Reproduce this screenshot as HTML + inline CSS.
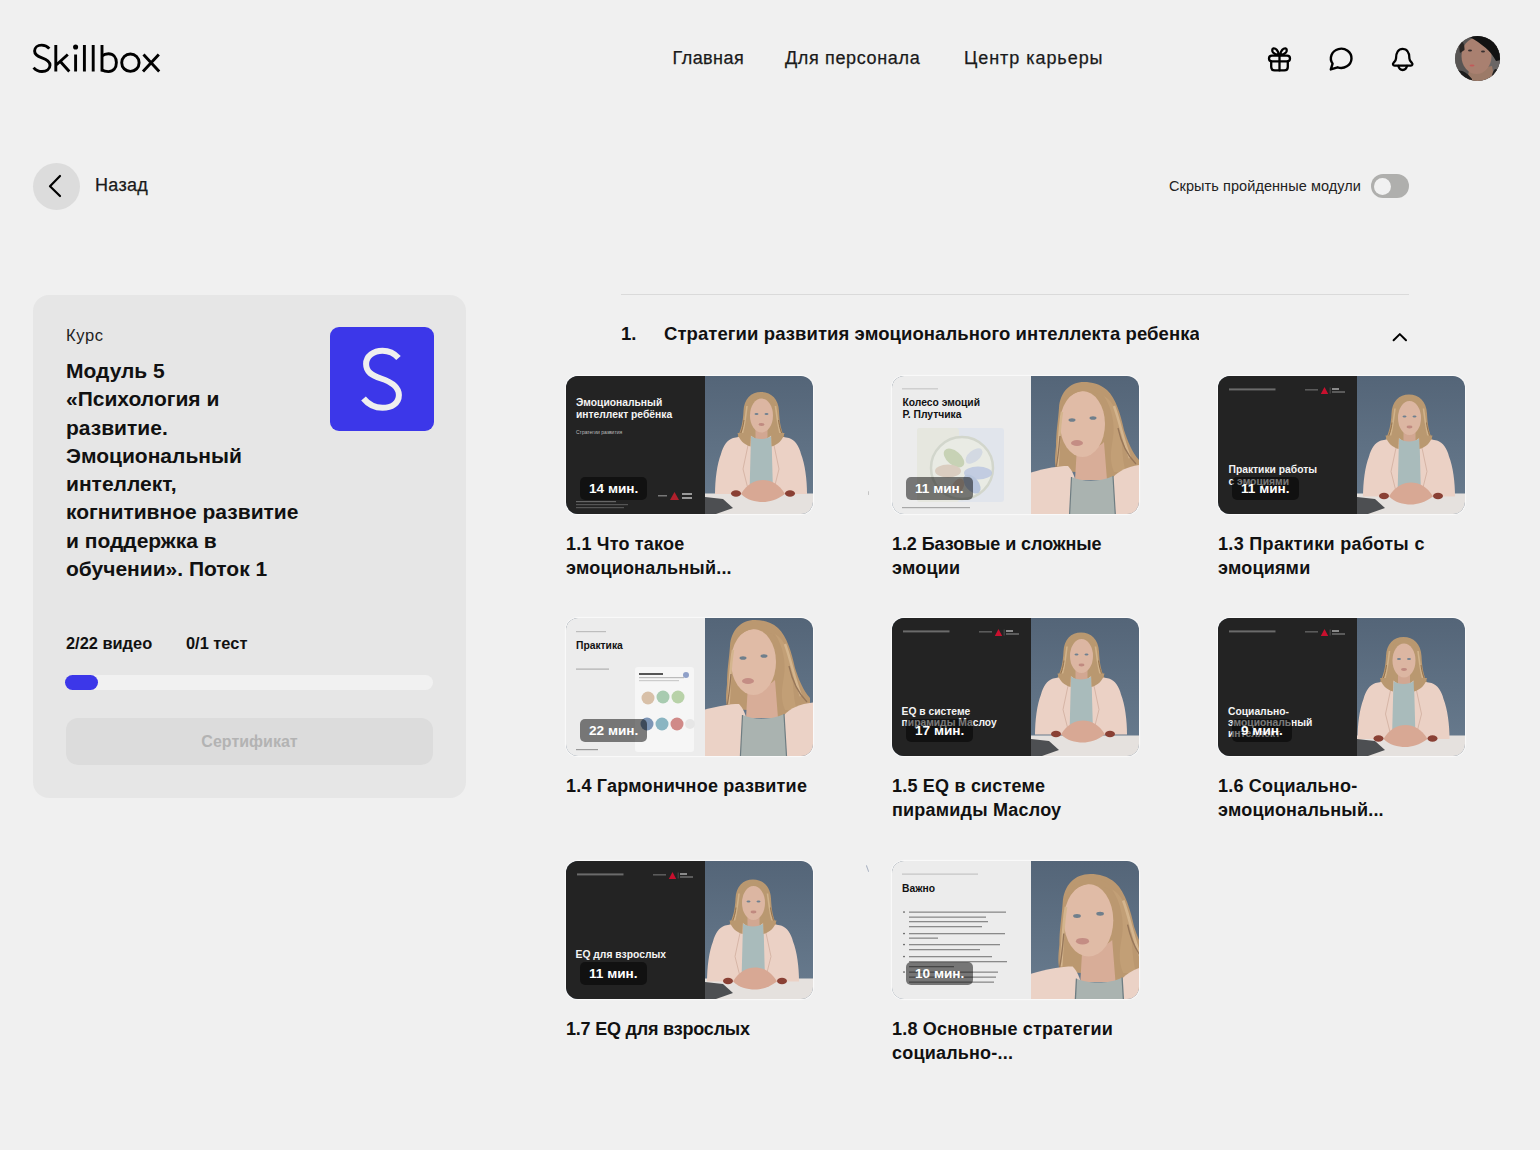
<!DOCTYPE html>
<html lang="ru">
<head>
<meta charset="utf-8">
<title>Skillbox</title>
<style>
*{box-sizing:border-box;margin:0;padding:0}
html,body{width:1540px;height:1150px;overflow:hidden;background:#f0f0f0;font-family:"Liberation Sans",sans-serif;color:#111}
.abs{position:absolute}
.nav{position:absolute;top:47px;font-size:18px;line-height:22px;color:#1a1a1a;white-space:nowrap;-webkit-text-stroke:0.25px #1a1a1a}
.card{position:absolute;left:33px;top:295px;width:433px;height:503px;background:#e6e6e6;border-radius:16px}
.thumb{position:absolute;width:247px;height:138px;border-radius:12px;overflow:hidden;box-shadow:0 0 1px 1px rgba(255,255,255,.65)}
.thumb svg{display:block}
.ttl{position:absolute;width:240px;font-size:18px;line-height:24px;font-weight:700;color:#111;white-space:nowrap;letter-spacing:0.2px}
.badge{position:absolute;left:14px;top:101px;height:23px;border-radius:5px;background:rgba(0,0,0,.5);color:#fff;font-size:13.6px;font-weight:700;line-height:23px;padding:0 9px;white-space:nowrap}
</style>
</head>
<body>
<!-- logo -->
<svg class="abs" style="left:0;top:0" width="180" height="90" viewBox="0 0 180 90" fill="none" stroke="#000" stroke-width="2.9" stroke-linecap="butt" stroke-linejoin="round">
  <path d="M49.3 48.6C47.3 46.3 44.6 45.1 41.6 45.1C37.6 45.1 34.6 47.6 34.6 51C34.6 54.6 37.6 56.4 42 57.9C47 59.6 50 61.6 50 65.3C50 69.1 46.4 71.5 42 71.5C38.6 71.5 35.6 70 33.6 67.6"/>
  <path d="M55.8 45V71.5M67.8 54.5L56.2 65M60.3 61.5L69.3 71.5"/>
  <path d="M75.6 54.5V71.5"/>
  <circle cx="75.6" cy="47" r="1.1" fill="#000"/>
  <path d="M84.4 45V71.5M93.2 45V71.5M102 45V71.5"/>
  <path d="M102 56C103.6 54.6 105.8 53.8 108.4 53.8C113.6 53.8 116.4 57.6 116.4 62.6C116.4 67.8 113.4 71.6 108.4 71.6C105.6 71.6 103.6 71 102 70"/>
  <circle cx="130.4" cy="62.7" r="8.7"/>
  <path d="M143.5 54.5L159.2 71.5M158.8 54.5L143 71.5"/>
</svg>

<!-- nav -->
<div class="nav" style="left:672.5px;letter-spacing:0.45px">Главная</div>
<div class="nav" style="left:785px;letter-spacing:0.65px">Для персонала</div>
<div class="nav" style="left:964px;letter-spacing:0.95px">Центр карьеры</div>

<!-- icons -->
<svg class="abs" style="left:1262px;top:42px" width="34" height="34" viewBox="0 0 34 34" fill="none" stroke="#000" stroke-width="2.3" stroke-linecap="round" stroke-linejoin="round">
  <rect x="7" y="13.6" width="21" height="5.8" rx="2.9"/>
  <path d="M9.2 19.4V25C9.2 27 10.7 28.4 12.7 28.4H22.3C24.3 28.4 25.8 27 25.8 25V19.4"/>
  <path d="M17.5 13.6V28.4"/>
  <path d="M17.3 13C16 9 13.5 6.2 11.5 6.4C10 6.6 9.9 8.8 11 10.4C12.3 12.2 15 13 17.3 13Z"/>
  <path d="M17.7 13C19 9 21.5 6.2 23.5 6.4C25 6.6 25.1 8.8 24 10.4C22.7 12.2 20 13 17.7 13Z"/>
</svg>
<svg class="abs" style="left:1323px;top:41.5px" width="34" height="34" viewBox="0 0 34 34" fill="none" stroke="#000" stroke-width="2.4" stroke-linecap="round" stroke-linejoin="round">
  <path d="M9.6 21.6A10.3 9.6 0 1 1 14.6 25.3L7.8 27.4Z"/>
</svg>
<svg class="abs" style="left:1386px;top:41.5px" width="34" height="34" viewBox="0 0 34 34" fill="none" stroke="#000" stroke-width="2.3" stroke-linecap="round" stroke-linejoin="round">
  <path d="M10 16.5C10 10.5 12.5 6.8 16.7 6.8C20.9 6.8 23.4 10.5 23.4 16.5C23.4 18.5 24.8 19.8 25.8 20.8C27 22 26.4 23.6 24.8 23.6H8.6C7 23.6 6.4 22 7.6 20.8C8.6 19.8 10 18.5 10 16.5Z"/>
  <path d="M12.4 23.8C12.9 26.5 14.6 28 16.7 28C18.8 28 20.5 26.5 21 23.8"/>
</svg>
<!-- avatar -->
<div class="abs" style="left:1454.5px;top:35.8px;width:45.5px;height:45.5px;border-radius:50%;overflow:hidden;background:#5a5756">
  <svg width="46" height="46" viewBox="0 0 46 46">
    <rect width="46" height="46" fill="#585554"/>
    <rect x="34" y="0" width="12" height="46" fill="#6a6665"/>
    <path d="M14 34L37 30L40 46L12 46Z" fill="#9c7a68"/>
    <ellipse cx="21.5" cy="20" rx="15" ry="18" fill="#a98070"/>
    <path d="M0 35C6 33 12 36 17 43L17 46L0 46Z" fill="#1c1c1c"/>
    <path d="M40 33C44 33 46 38 46 46L35 46C37 41 37 36 40 33Z" fill="#222"/>
    <path d="M14 0.5C26 -2 41 2 46 14L46 24L41 25C36 15 27 8 14 0.5Z" fill="#121212"/>
    <path d="M5.5 6C8 5 9.5 8 9.5 14L5 17C4 12 4 8 5.5 6Z" fill="#2a2624"/>
    <ellipse cx="15" cy="14.5" rx="2" ry="1" fill="#3a3030"/>
    <ellipse cx="28" cy="15.5" rx="2" ry="1" fill="#3a3030"/>
    <ellipse cx="17" cy="29.5" rx="2.5" ry="0.9" fill="#c25a5a"/>
  </svg>
</div>
<!-- back -->
<div class="abs" style="left:33px;top:163px;width:47px;height:47px;border-radius:50%;background:#dcdcdc"></div>
<svg class="abs" style="left:33px;top:163px" width="47" height="47" viewBox="0 0 47 47" fill="none" stroke="#000" stroke-width="2.2" stroke-linecap="round" stroke-linejoin="round">
  <path d="M27 13L17 23.3L27 33"/>
</svg>
<div class="abs" style="left:95px;top:174px;font-size:18px;line-height:22px;color:#1a1a1a;-webkit-text-stroke:0.25px #1a1a1a;letter-spacing:0.3px">Назад</div>

<!-- toggle -->
<div class="abs" style="left:1169px;top:177px;font-size:14.5px;line-height:18px;color:#222;white-space:nowrap;letter-spacing:0.07px">Скрыть пройденные модули</div>
<div class="abs" style="left:1371px;top:174px;width:37.5px;height:23.6px;border-radius:12px;background:#afafad"></div>
<div class="abs" style="left:1374.2px;top:177.6px;width:17px;height:17px;border-radius:50%;background:#f1f1f1"></div>

<!-- course card -->
<div class="card"></div>
<div class="abs" style="left:66px;top:325px;font-size:16.5px;line-height:20px;color:#222;letter-spacing:0.6px">Курс</div>
<div class="abs" style="left:66px;top:357px;width:260px;font-size:21px;line-height:28.3px;font-weight:700;color:#111">Модуль 5<br>«Психология и<br>развитие.<br>Эмоциональный<br>интеллект,<br>когнитивное развитие<br>и поддержка в<br>обучении». Поток 1</div>
<div class="abs" style="left:330px;top:327px;width:104px;height:104px;border-radius:9px;background:#3c37e9"></div>
<svg class="abs" style="left:330px;top:327px" width="104" height="104" viewBox="0 0 104 104" fill="none" stroke="#efefef" stroke-width="6" stroke-linecap="butt">
  <path d="M68.5 31C64.5 26.5 58.5 23.7 52.5 23.7C43.5 23.7 36.1 29 36.1 37C36.1 45 42 48.5 51 51.5C61.5 55 68.9 59.5 68.9 68C68.9 76.5 61.5 80.8 52.5 80.8C44.5 80.8 38 77 33.5 71.5"/>
</svg>
<div class="abs" style="left:66px;top:633px;font-size:16.4px;line-height:20px;font-weight:700;color:#111;white-space:nowrap">2/22 видео</div>
<div class="abs" style="left:186px;top:633px;font-size:16.4px;line-height:20px;font-weight:700;color:#111;white-space:nowrap">0/1 тест</div>
<div class="abs" style="left:66px;top:675px;width:367px;height:15px;border-radius:8px;background:#f1f1f1"></div>
<div class="abs" style="left:65px;top:675px;width:33px;height:15px;border-radius:8px;background:#3c37e9"></div>
<div class="abs" style="left:66px;top:718px;width:367px;height:47px;border-radius:12px;background:#dcdcdc;color:#b3b3b3;font-size:16px;font-weight:700;line-height:47px;text-align:center">Сертификат</div>

<!-- section -->
<div class="abs" style="left:621px;top:294px;width:788px;height:1px;background:#dadada"></div>
<div class="abs" style="left:621px;top:323px;font-size:18.5px;line-height:22px;font-weight:700;color:#111">1.</div>
<div class="abs" style="left:664px;top:323px;width:535px;overflow:hidden;font-size:18.5px;line-height:22px;font-weight:700;color:#111;white-space:nowrap;letter-spacing:0.08px">Стратегии развития эмоционального интеллекта ребенка</div>
<svg class="abs" style="left:1388px;top:326px" width="24" height="20" viewBox="0 0 24 20" fill="none" stroke="#000" stroke-width="2" stroke-linecap="round" stroke-linejoin="round">
  <path d="M5.6 14.3L11.8 8.1L18 14.3"/>
</svg>

<!-- THUMBS -->
<svg width="0" height="0" style="position:absolute">
  <defs>
    <linearGradient id="bg" x1="0" y1="0" x2="0" y2="1">
      <stop offset="0" stop-color="#546578"/>
      <stop offset="1" stop-color="#697c8f"/>
    </linearGradient>
    <symbol id="seat" viewBox="0 0 247 138" width="247" height="138" overflow="visible">
      <path d="M195 16C185 16 178 23 177.5 35C177 46 175 54 172 60C170 65 173 70 178 70L212 70C217 70 220 65 218 60C215 54 213.5 46 213 35C212.5 23 205 16 195 16Z" fill="#b99870"/>
      <rect x="189.5" y="50" width="12" height="16" fill="#d2a792"/>
      <ellipse cx="195.5" cy="39.5" rx="11.5" ry="17" fill="#dcb6a2"/>
      <path d="M183.5 29C185 21 190 18.5 195 18.5C201 18.5 206 22 207.5 29C203 23.5 199 22 195 22C190 22 186 24 183.5 29Z" fill="#b99870"/>
      <path d="M181 30C179.5 42 178.5 52 175 62M209.5 30C211 42 212 52 215.5 62" fill="none" stroke="#d0b28a" stroke-width="1.6"/>
      <path d="M178 44C177 52 175 57 173 61M212.5 44C213.5 52 215.5 57 217.5 61" fill="none" stroke="#94734f" stroke-width="1"/>
      <ellipse cx="190.5" cy="38" rx="2" ry="1" fill="#6f8090"/>
      <ellipse cx="200.5" cy="38" rx="2" ry="1" fill="#6f8090"/>
      <ellipse cx="195.5" cy="48.5" rx="3" ry="1.4" fill="#c08a80"/>
      <path d="M149 118C149 104 151 88 155 78C157 70 161 64 167 62L184 59L195 67L206 59L223 62C229 64 233 70 235 78C239 88 241 104 241 118Z" fill="#ebd1c5"/>
      <path d="M185 60C190 64 200 64 205.5 60L207 117L183.5 117Z" fill="#a9bbbb"/>
      <path d="M184 60L177 93L183 117M206 60L213 93L207 117" fill="none" stroke="#d6b5a6" stroke-width="1"/>
      <path d="M171.5 57C173 64 178 68.5 184.5 70.5L185 57Z" fill="#b99870"/>
      <path d="M218.5 57C217 64 212 68.5 205.5 70.5L205 57Z" fill="#b99870"/>
      <path d="M175 118C181 108 189 104 197 104C205 104 213 108 219 118C211 124 203 126 197 126C189 126 181 124 175 118Z" fill="#d8a894"/>
      <ellipse cx="170" cy="117.5" rx="5" ry="3.2" fill="#8a4034"/>
      <ellipse cx="224" cy="117.5" rx="5" ry="3.2" fill="#8a4034"/>
    </symbol>
    <symbol id="close" viewBox="0 0 247 138" width="247" height="138" overflow="visible">
      <path d="M192 6C178 6 168 16 167 32C166 46 164 56 164 70C163 80 162 88 165 95L185 96L222 110L247 112L247 84C240 76 236 66 232 54C229 40 224 22 215 14C208 8 200 6 192 6Z" fill="#bb9870"/>
      <path d="M185 70C192 74 204 74 212 66L215 104L183 104Z" fill="#d8ad98"/>
      <ellipse cx="190.5" cy="48" rx="22.5" ry="33" fill="#e0bba6"/>
      <path d="M168 36C170 19 180 10 193 10C206 10 215 18 219 30C212 20 203 15 193 15C182 15 173 22 168 36Z" fill="#bb9870"/>
      <path d="M212 20C220 32 223 48 221 62C219 74 217 84 222 96L234 96C229 82 231 62 227 44C224 32 219 24 212 20Z" fill="#c29f76"/>
      <path d="M170 36C167 52 167 70 165.5 90M222 30C228 46 231 64 238 82" fill="none" stroke="#d4b58e" stroke-width="2.5"/>
      <path d="M226 52C229 66 234 78 244 88M168 60C167 72 166 82 164 92" fill="none" stroke="#97775a" stroke-width="1.3"/>
      <ellipse cx="180" cy="44" rx="3.5" ry="1.8" fill="#6f7f8c"/>
      <ellipse cx="201" cy="42" rx="3.5" ry="1.8" fill="#6f7f8c"/>
      <ellipse cx="185" cy="67" rx="6" ry="3" fill="#c48d84"/>
      <path d="M130 150L130 99C150 93 164 90 176 90C180 94 183 101 184 107L178 150Z" fill="#ebd2c6"/>
      <path d="M221 101C229 93 239 89 256 88L256 150L223 150Z" fill="#ebd2c6"/>
      <path d="M179.5 101C190 106 210 106 221 100L224 150L177 150Z" fill="#aab3b0"/>
      <path d="M179.5 101L177 150M221 100L224 150" fill="none" stroke="#6e7d82" stroke-width="1.2"/>
    </symbol>
    <clipPath id="ph"><rect x="139" y="0" width="108" height="138"/></clipPath>
  </defs>
</svg>

<div class="thumb" style="left:566px;top:376px">
<svg width="247" height="138" viewBox="0 0 247 138">
<rect width="247" height="138" fill="url(#bg)"/>
<g clip-path="url(#ph)"><rect x="139" y="117.5" width="108" height="21" fill="#e5e1de"/><use href="#seat" transform="translate(0 0) scale(1)"/><path d="M139 121L157 123L167 132L150 138L139 138Z" fill="#4d4f52"/></g>
<rect width="139" height="138" fill="#232323"/><text x="10" y="30" font-family="Liberation Sans" font-weight="700" font-size="10.3" fill="#f4f4f4">Эмоциональный</text><text x="10" y="41.5" font-family="Liberation Sans" font-weight="700" font-size="10.3" fill="#f4f4f4">интеллект ребёнка</text><text x="10" y="58" font-family="Liberation Sans" font-weight="400" font-size="5" fill="#bdbdbd">Стратегии развития</text><path d="M104 124L108.5 116L113 124Z" fill="#b0202c"/><rect x="92" y="119" width="9" height="1.5" fill="#777"/><rect x="116" y="117" width="10" height="2" fill="#999"/><rect x="116" y="121" width="10" height="2" fill="#999"/><rect x="10" y="125" width="40" height="1.2" fill="#666"/><rect x="10" y="128" width="52" height="1.2" fill="#555"/><rect x="10" y="131" width="48" height="1.2" fill="#555"/>
</svg>
<div class="badge">14 мин.</div>
</div>
<div class="thumb" style="left:892px;top:376px">
<svg width="247" height="138" viewBox="0 0 247 138">
<rect width="247" height="138" fill="url(#bg)"/>
<g clip-path="url(#ph)"><use href="#close" transform="translate(0 0) scale(1)"/></g>
<rect width="139" height="138" fill="#ececec"/><rect x="10" y="12.2" width="36" height="1.2" fill="#c8c8c8"/><text x="10.5" y="30" font-family="Liberation Sans" font-weight="700" font-size="10.3" fill="#111">Колесо эмоций</text><text x="10.5" y="41.5" font-family="Liberation Sans" font-weight="700" font-size="10.3" fill="#111">Р. Плутчика</text><rect x="25" y="52" width="87" height="74" rx="3" fill="#e1e5ec"/><rect x="25" y="52" width="42" height="74" rx="3" fill="#e6e7df"/><circle cx="70" cy="92" r="31" fill="#e9ebe4"/><circle cx="70" cy="92" r="31" fill="none" stroke="#d2d6cc" stroke-width="2.5"/><g opacity="0.75"><ellipse cx="62" cy="82" rx="12" ry="7" transform="rotate(40 62 82)" fill="#bccaa6"/><ellipse cx="56" cy="95" rx="13" ry="6.5" fill="#d6c4b4"/><ellipse cx="86" cy="97" rx="14" ry="6.5" fill="#b5c2e0"/><ellipse cx="80" cy="108" rx="11" ry="6.5" transform="rotate(50 80 108)" fill="#a9badb"/><ellipse cx="82" cy="80" rx="10" ry="5.5" transform="rotate(-40 82 80)" fill="#ccd3e2"/><ellipse cx="66" cy="110" rx="8" ry="5.5" transform="rotate(-60 66 110)" fill="#dcc0ae"/></g><rect x="10" y="131" width="68" height="1.2" fill="#a8a8a8"/>
</svg>
<div class="badge">11 мин.</div>
</div>
<div class="thumb" style="left:1218px;top:376px">
<svg width="247" height="138" viewBox="0 0 247 138">
<rect width="247" height="138" fill="url(#bg)"/>
<g clip-path="url(#ph)"><rect x="139" y="117.5" width="108" height="21" fill="#e5e1de"/><use href="#seat" transform="translate(-4 2.5) scale(1)"/><path d="M139 121L157 123L167 132L150 138L139 138Z" fill="#4d4f52"/></g>
<rect width="139" height="138" fill="#232323"/><rect x="11" y="12.4" width="46.5" height="2" fill="#6b6b6b"/><rect x="87" y="13" width="13" height="1.6" fill="#5a5a5a"/><path d="M102.8 18L106.5 11L110.2 18Z" fill="#c8102e"/><rect x="111.8" y="11.5" width="0.6" height="6" fill="#666"/><rect x="114" y="12" width="7" height="2" fill="#8a8a8a"/><rect x="114" y="15.2" width="13" height="1.6" fill="#6a6a6a"/><text x="10.5" y="97" font-family="Liberation Sans" font-weight="700" font-size="10.3" fill="#f4f4f4">Практики работы</text><text x="10.5" y="108.5" font-family="Liberation Sans" font-weight="700" font-size="10.3" fill="#f4f4f4">с эмоциями</text>
</svg>
<div class="badge">11 мин.</div>
</div>
<div class="thumb" style="left:566px;top:618px">
<svg width="247" height="138" viewBox="0 0 247 138">
<rect width="247" height="138" fill="url(#bg)"/>
<g clip-path="url(#ph)"><use href="#close" transform="translate(-3 -4) scale(1)"/></g>
<rect width="139" height="138" fill="#ececec"/><rect x="10" y="13" width="30" height="1.2" fill="#bdbdbd"/><text x="10" y="31" font-family="Liberation Sans" font-weight="700" font-size="10.3" fill="#111">Практика</text><rect x="10" y="50.5" width="33" height="1.2" fill="#b0b0b0"/><rect x="69" y="49" width="59" height="85" rx="3" fill="#f6f6f6"/><rect x="73" y="55" width="24" height="2" fill="#555"/><rect x="73" y="59" width="45" height="1.2" fill="#bbb"/><rect x="73" y="62" width="40" height="1.2" fill="#ccc"/><circle cx="120" cy="57" r="3" fill="#8fa0c8"/><circle cx="82" cy="80" r="6.5" fill="#d8c0a8"/><circle cx="97" cy="79" r="6.5" fill="#a8cbb0"/><circle cx="112" cy="79" r="6.5" fill="#b8d2a8"/><circle cx="81" cy="106" r="6.5" fill="#7d95b5"/><circle cx="96" cy="106" r="6.5" fill="#8ab5c2"/><circle cx="111" cy="106" r="6.5" fill="#d08a88"/><circle cx="124" cy="106" r="5" fill="#e6e6e6"/><rect x="10" y="131" width="22" height="1.2" fill="#999"/>
</svg>
<div class="badge">22 мин.</div>
</div>
<div class="thumb" style="left:892px;top:618px">
<svg width="247" height="138" viewBox="0 0 247 138">
<rect width="247" height="138" fill="url(#bg)"/>
<g clip-path="url(#ph)"><rect x="139" y="117.5" width="108" height="21" fill="#e5e1de"/><use href="#seat" transform="translate(-6 -1.5) scale(1)"/><path d="M139 121L157 123L167 132L150 138L139 138Z" fill="#4d4f52"/></g>
<rect width="139" height="138" fill="#232323"/><rect x="11" y="12.4" width="46.5" height="2" fill="#6b6b6b"/><rect x="87" y="13" width="13" height="1.6" fill="#5a5a5a"/><path d="M102.8 18L106.5 11L110.2 18Z" fill="#c8102e"/><rect x="111.8" y="11.5" width="0.6" height="6" fill="#666"/><rect x="114" y="12" width="7" height="2" fill="#8a8a8a"/><rect x="114" y="15.2" width="13" height="1.6" fill="#6a6a6a"/><text x="9.6" y="97" font-family="Liberation Sans" font-weight="700" font-size="10.3" fill="#f4f4f4">EQ в системе</text><text x="9.6" y="108" font-family="Liberation Sans" font-weight="700" font-size="10.3" fill="#f4f4f4">пирамиды Маслоу</text>
</svg>
<div class="badge">17 мин.</div>
</div>
<div class="thumb" style="left:1218px;top:618px">
<svg width="247" height="138" viewBox="0 0 247 138">
<rect width="247" height="138" fill="url(#bg)"/>
<g clip-path="url(#ph)"><rect x="139" y="117.5" width="108" height="21" fill="#e5e1de"/><use href="#seat" transform="translate(-9.5 3) scale(1)"/><path d="M139 121L157 123L167 132L150 138L139 138Z" fill="#4d4f52"/></g>
<rect width="139" height="138" fill="#232323"/><rect x="11" y="12.4" width="46.5" height="2" fill="#6b6b6b"/><rect x="87" y="13" width="13" height="1.6" fill="#5a5a5a"/><path d="M102.8 18L106.5 11L110.2 18Z" fill="#c8102e"/><rect x="111.8" y="11.5" width="0.6" height="6" fill="#666"/><rect x="114" y="12" width="7" height="2" fill="#8a8a8a"/><rect x="114" y="15.2" width="13" height="1.6" fill="#6a6a6a"/><text x="10" y="97" font-family="Liberation Sans" font-weight="700" font-size="10.3" fill="#f4f4f4">Социально-</text><text x="10" y="108" font-family="Liberation Sans" font-weight="700" font-size="10.3" fill="#f4f4f4">эмоциональный</text><text x="10" y="119" font-family="Liberation Sans" font-weight="700" font-size="10.3" fill="#f4f4f4">интеллект</text>
</svg>
<div class="badge">9 мин.</div>
</div>
<div class="thumb" style="left:566px;top:861px">
<svg width="247" height="138" viewBox="0 0 247 138">
<rect width="247" height="138" fill="url(#bg)"/>
<g clip-path="url(#ph)"><rect x="139" y="117.5" width="108" height="21" fill="#e5e1de"/><use href="#seat" transform="translate(-8 2.5) scale(1)"/><path d="M139 121L157 123L167 132L150 138L139 138Z" fill="#4d4f52"/></g>
<rect width="139" height="138" fill="#232323"/><rect x="11" y="12.4" width="46.5" height="2" fill="#6b6b6b"/><rect x="87" y="13" width="13" height="1.6" fill="#5a5a5a"/><path d="M102.8 18L106.5 11L110.2 18Z" fill="#c8102e"/><rect x="111.8" y="11.5" width="0.6" height="6" fill="#666"/><rect x="114" y="12" width="7" height="2" fill="#8a8a8a"/><rect x="114" y="15.2" width="13" height="1.6" fill="#6a6a6a"/><text x="9.6" y="97" font-family="Liberation Sans" font-weight="700" font-size="10.3" fill="#f4f4f4">EQ для взрослых</text>
</svg>
<div class="badge">11 мин.</div>
</div>
<div class="thumb" style="left:892px;top:861px">
<svg width="247" height="138" viewBox="0 0 247 138">
<rect width="247" height="138" fill="url(#bg)"/>
<g clip-path="url(#ph)"><use href="#close" transform="translate(-13 6.5) scale(1.1)"/></g>
<rect width="139" height="138" fill="#ececec"/><rect x="10" y="12.5" width="76" height="1.2" fill="#c4c4c4"/><text x="10" y="31" font-family="Liberation Sans" font-weight="700" font-size="10.3" fill="#111">Важно</text><circle cx="12" cy="51.1" r="0.8" fill="#444"/><circle cx="12" cy="72.6" r="0.8" fill="#444"/><circle cx="12" cy="83.6" r="0.8" fill="#444"/><circle cx="12" cy="95.6" r="0.8" fill="#444"/><circle cx="12" cy="111.1" r="0.8" fill="#444"/><rect x="17" y="50.5" width="97" height="1.3" fill="#8a8a8a"/><rect x="17" y="55.5" width="77" height="1.3" fill="#8a8a8a"/><rect x="17" y="60" width="79" height="1.3" fill="#8a8a8a"/><rect x="17" y="65" width="73" height="1.3" fill="#8a8a8a"/><rect x="17" y="72" width="96" height="1.3" fill="#8a8a8a"/><rect x="17" y="76.5" width="29" height="1.3" fill="#8a8a8a"/><rect x="17" y="83" width="91" height="1.3" fill="#8a8a8a"/><rect x="17" y="88" width="71" height="1.3" fill="#8a8a8a"/><rect x="17" y="95" width="83" height="1.3" fill="#8a8a8a"/><rect x="17" y="100" width="98" height="1.3" fill="#8a8a8a"/><rect x="17" y="105" width="45" height="1.3" fill="#8a8a8a"/><rect x="17" y="110.5" width="89" height="1.3" fill="#8a8a8a"/><rect x="17" y="115.5" width="87" height="1.3" fill="#8a8a8a"/><rect x="17" y="120.5" width="85" height="1.3" fill="#8a8a8a"/>
</svg>
<div class="badge">10 мин.</div>
</div>
<div class="ttl" style="left:566px;top:531.6px">1.1 Что такое<br>эмоциональный...</div>
<div class="ttl" style="left:892px;top:531.6px"><span style="letter-spacing:-0.08px">1.2 Базовые и сложные</span><br>эмоции</div>
<div class="ttl" style="left:1218px;top:531.6px"><span style="letter-spacing:0.33px">1.3 Практики работы с</span><br>эмоциями</div>
<div class="ttl" style="left:566px;top:774.1px">1.4 Гармоничное развитие</div>
<div class="ttl" style="left:892px;top:774.1px">1.5 EQ в системе<br>пирамиды Маслоу</div>
<div class="ttl" style="left:1218px;top:774.1px">1.6 Социально-<br>эмоциональный...</div>
<div class="ttl" style="left:566px;top:1016.6px"><span style="letter-spacing:-0.22px">1.7 EQ для взрослых</span></div>
<div class="ttl" style="left:892px;top:1016.6px">1.8 Основные стратегии<br>социально-...</div>
<!-- /THUMBS -->
<div class="abs" style="left:867.5px;top:491px;width:1.2px;height:4px;background:#c4c4c4;border-radius:1px"></div>
<div class="abs" style="left:867px;top:865px;width:1.3px;height:7px;background:#aab2c2;transform:rotate(-20deg);border-radius:1px"></div>

</body>
</html>
